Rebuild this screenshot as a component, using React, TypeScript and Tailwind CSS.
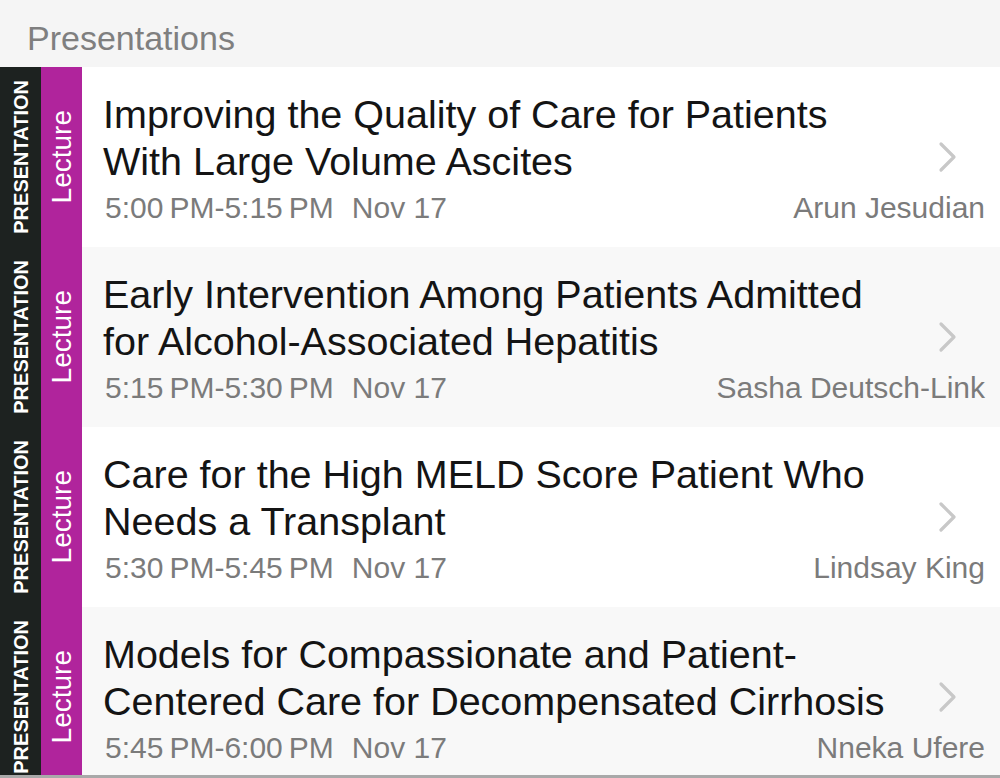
import React from "react";

type Presentation = {
  title: string;
  time: string;
  date: string;
  speaker: string;
};

const presentations: Presentation[] = [
  {
    title: "Improving the Quality of Care for Patients With Large Volume Ascites",
    time: "5:00\u2009PM-5:15\u2009PM",
    date: "Nov 17",
    speaker: "Arun Jesudian"
  },
  {
    title: "Early Intervention Among Patients Admitted for Alcohol-Associated Hepatitis",
    time: "5:15\u2009PM-5:30\u2009PM",
    date: "Nov 17",
    speaker: "Sasha Deutsch-Link"
  },
  {
    title: "Care for the High MELD Score Patient Who Needs a Transplant",
    time: "5:30\u2009PM-5:45\u2009PM",
    date: "Nov 17",
    speaker: "Lindsay King"
  },
  {
    title: "Models for Compassionate and Patient-Centered Care for Decompensated Cirrhosis",
    time: "5:45\u2009PM-6:00\u2009PM",
    date: "Nov 17",
    speaker: "Nneka Ufere"
  }
];

export default function App() {
  return (
    <div className="flex h-[778px] w-[1000px] flex-col overflow-hidden bg-white font-['Liberation_Sans',Arial,sans-serif]">
      <header className="flex h-[67px] shrink-0 items-center bg-[#f5f5f5] pl-[27px] pt-[8px]">
        <h1 className="text-[34px] leading-none text-[#7f7f7f]">Presentations</h1>
      </header>

      <ul className="flex-1 overflow-hidden">
        {presentations.map((item, index) => (
          <PresentationRow key={item.title} item={item} shaded={index % 2 === 1} />
        ))}
      </ul>

      <div className="h-[3px] shrink-0 bg-[#a9a9a9]" />
    </div>
  );
}

function PresentationRow({ item, shaded }: { item: Presentation; shaded: boolean }) {
  return (
    <li className={`relative flex h-[180px] ${shaded ? "bg-[#f8f8f8]" : "bg-white"}`}>
      <div className="flex w-[41px] shrink-0 items-center justify-center bg-[#1d2220]">
        <span className="rotate-180 text-[20px] font-bold leading-none text-white [writing-mode:vertical-rl]">
          PRESENTATION
        </span>
      </div>
      <div className="flex w-[41px] shrink-0 items-center justify-center bg-[#b0249c]">
        <span className="rotate-180 text-[28px] leading-none text-white [writing-mode:vertical-rl]">
          Lecture
        </span>
      </div>

      <div className="flex min-w-0 flex-1 flex-col pl-[21px] pr-[15px] pt-[24px]">
        <h2 className="w-[798px] text-[39.5px] leading-[47px] text-[#141414]">{item.title}</h2>
        <div className="mt-[6px] flex items-center text-[30px] leading-[34px] text-[#7b7b7b]">
          <span className="pl-[2px]">{item.time}</span>
          <span className="ml-[18px]">{item.date}</span>
          <span className="ml-auto">{item.speaker}</span>
        </div>
      </div>

      <svg
        className="absolute right-[41px] top-1/2 -translate-y-1/2"
        width="22"
        height="34"
        viewBox="0 0 22 34"
        fill="none"
      >
        <polyline
          points="4,4 17,17 4,30"
          stroke="#c8c8c8"
          strokeWidth="3.2"
          strokeLinecap="round"
          strokeLinejoin="round"
        />
      </svg>
    </li>
  );
}
